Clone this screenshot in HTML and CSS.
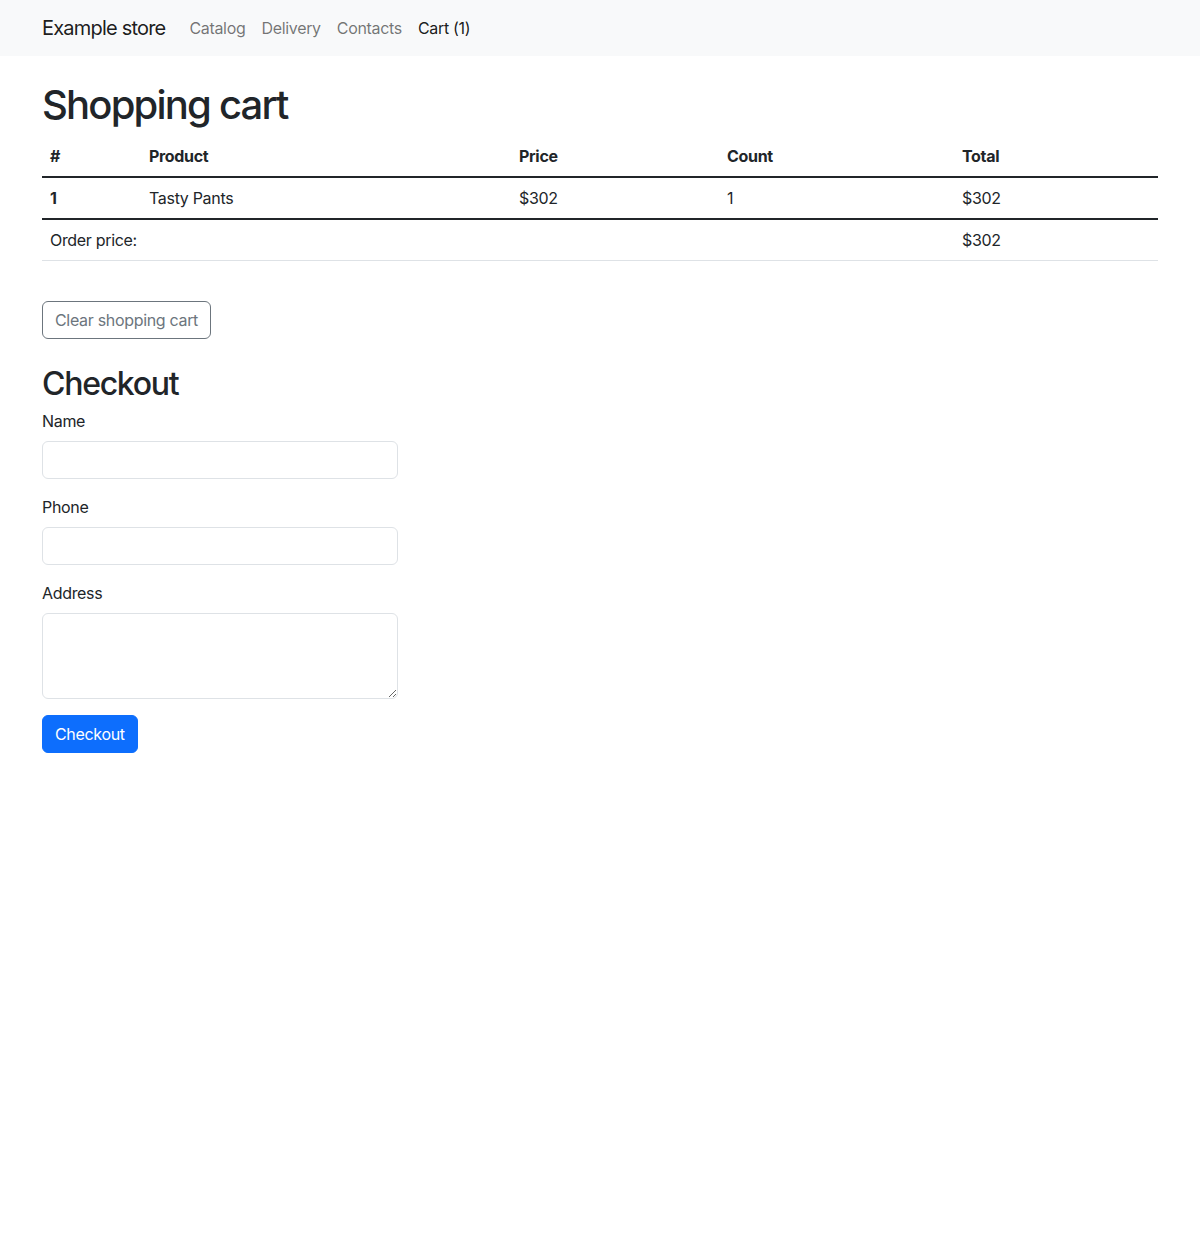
FILE: index.html
```html
<!DOCTYPE html>
<html lang="en">
<head>
<meta charset="utf-8">
<title>Example store</title>
<link rel="stylesheet" href="styles.css">
</head>
<body>
<nav class="navbar">
  <div class="container nav-inner">
    <a class="brand" href="#">Example store</a>
    <ul class="nav-links">
      <li><a class="nav-link" href="#">Catalog</a></li>
      <li><a class="nav-link" href="#">Delivery</a></li>
      <li><a class="nav-link" href="#">Contacts</a></li>
      <li><a class="nav-link active" href="#">Cart (1)</a></li>
    </ul>
  </div>
</nav>
<main class="container main">
  <h1 class="title">Shopping cart</h1>
  <table class="table">
    <colgroup>
      <col class="c1"><col class="c2"><col class="c3"><col class="c4"><col class="c5">
    </colgroup>
    <thead>
      <tr><th>#</th><th>Product</th><th>Price</th><th>Count</th><th>Total</th></tr>
    </thead>
    <tbody class="divider">
      <tr><th>1</th><td>Tasty Pants</td><td>$302</td><td>1</td><td>$302</td></tr>
    </tbody>
    <tfoot class="divider">
      <tr class="last"><td colspan="4">Order price:</td><td>$302</td></tr>
    </tfoot>
  </table>
  <div class="actions">
    <button class="btn btn-outline" type="button">Clear shopping cart</button>
  </div>
  <h2 class="subtitle">Checkout</h2>
  <form class="form">
    <div class="field">
      <label class="label" for="name">Name</label>
      <input class="input" id="name" type="text">
    </div>
    <div class="field">
      <label class="label" for="phone">Phone</label>
      <input class="input" id="phone" type="text">
    </div>
    <div class="field">
      <label class="label" for="address">Address</label>
      <textarea class="input textarea" id="address" rows="3"></textarea>
    </div>
    <button class="btn btn-primary" type="button">Checkout</button>
  </form>
</main>
</body>
</html>
```

FILE: styles.css
```css
* { box-sizing: border-box; }
body {
  margin: 0;
  font-family: Inter, "Liberation Sans", sans-serif;
  font-size: 16px;
  line-height: 1.5;
  letter-spacing: -0.02em;
  color: #212529;
  background: #fff;
}
.container {
  width: 1140px;
  margin: 0 auto;
  padding: 0 12px;
}
.navbar {
  background: #f8f9fa;
  height: 56px;
}
.nav-inner {
  display: flex;
  align-items: center;
  height: 56px;
}
.brand {
  font-size: 20px;
  line-height: 30px;
  letter-spacing: -0.04em;
  color: rgba(0,0,0,.9);
  text-decoration: none;
  margin-right: 16px;
}
.nav-links {
  display: flex;
  list-style: none;
  margin: 0;
  padding: 0;
}
.nav-link {
  display: block;
  padding: 8px 8px;
  color: rgba(0,0,0,.55);
  text-decoration: none;
}
.nav-link.active { color: rgba(0,0,0,.9); }
.main { padding-top: 24px; }
.title {
  font-size: 40px;
  font-weight: 500;
  line-height: 1.2;
  letter-spacing: -0.045em;
  padding-top: 1px;
  margin: 0 0 7px;
}
.table {
  width: 100%;
  border-collapse: collapse;
  margin-bottom: 40px;
}
.c1 { width: 99px; }
.c2 { width: 370px; }
.c3 { width: 208px; }
.c4 { width: 235px; }
.table th, .table td {
  padding: 8px;
  text-align: left;
  border-bottom: 1px solid #dee2e6;
  font-weight: 400;
}
.table th { font-weight: 700; }
.table thead th { border-bottom: none; }
.table tbody tr td, .table tbody tr th { border-bottom: none; }
.divider { border-top: 2px solid #212529; }
.btn {
  display: inline-block;
  font-family: inherit;
  font-size: 16px;
  line-height: 24px;
  letter-spacing: -0.02em;
  padding: 6px 12px;
  border-radius: 6px;
  border: 1px solid transparent;
  cursor: pointer;
}
.btn-outline {
  color: #6c757d;
  border-color: #6c757d;
  background: transparent;
}
.btn-primary {
  color: #fff;
  background: #0d6efd;
  border-color: #0d6efd;
}
.actions { margin-bottom: 24px; }
.subtitle {
  font-size: 32px;
  font-weight: 500;
  line-height: 1.2;
  letter-spacing: -0.04em;
  padding-top: 2px;
  margin: 0 0 6px;
}
.form { width: 356px; }
.field { margin-bottom: 16px; }
.label {
  display: block;
  margin-bottom: 8px;
}
.input {
  display: block;
  width: 100%;
  height: 38px;
  padding: 6px 12px;
  font-family: inherit;
  font-size: 16px;
  line-height: 24px;
  color: #212529;
  background: #fff;
  border: 1px solid #dee2e6;
  border-radius: 6px;
}
.textarea {
  height: 86px;
  resize: vertical;
}
```
